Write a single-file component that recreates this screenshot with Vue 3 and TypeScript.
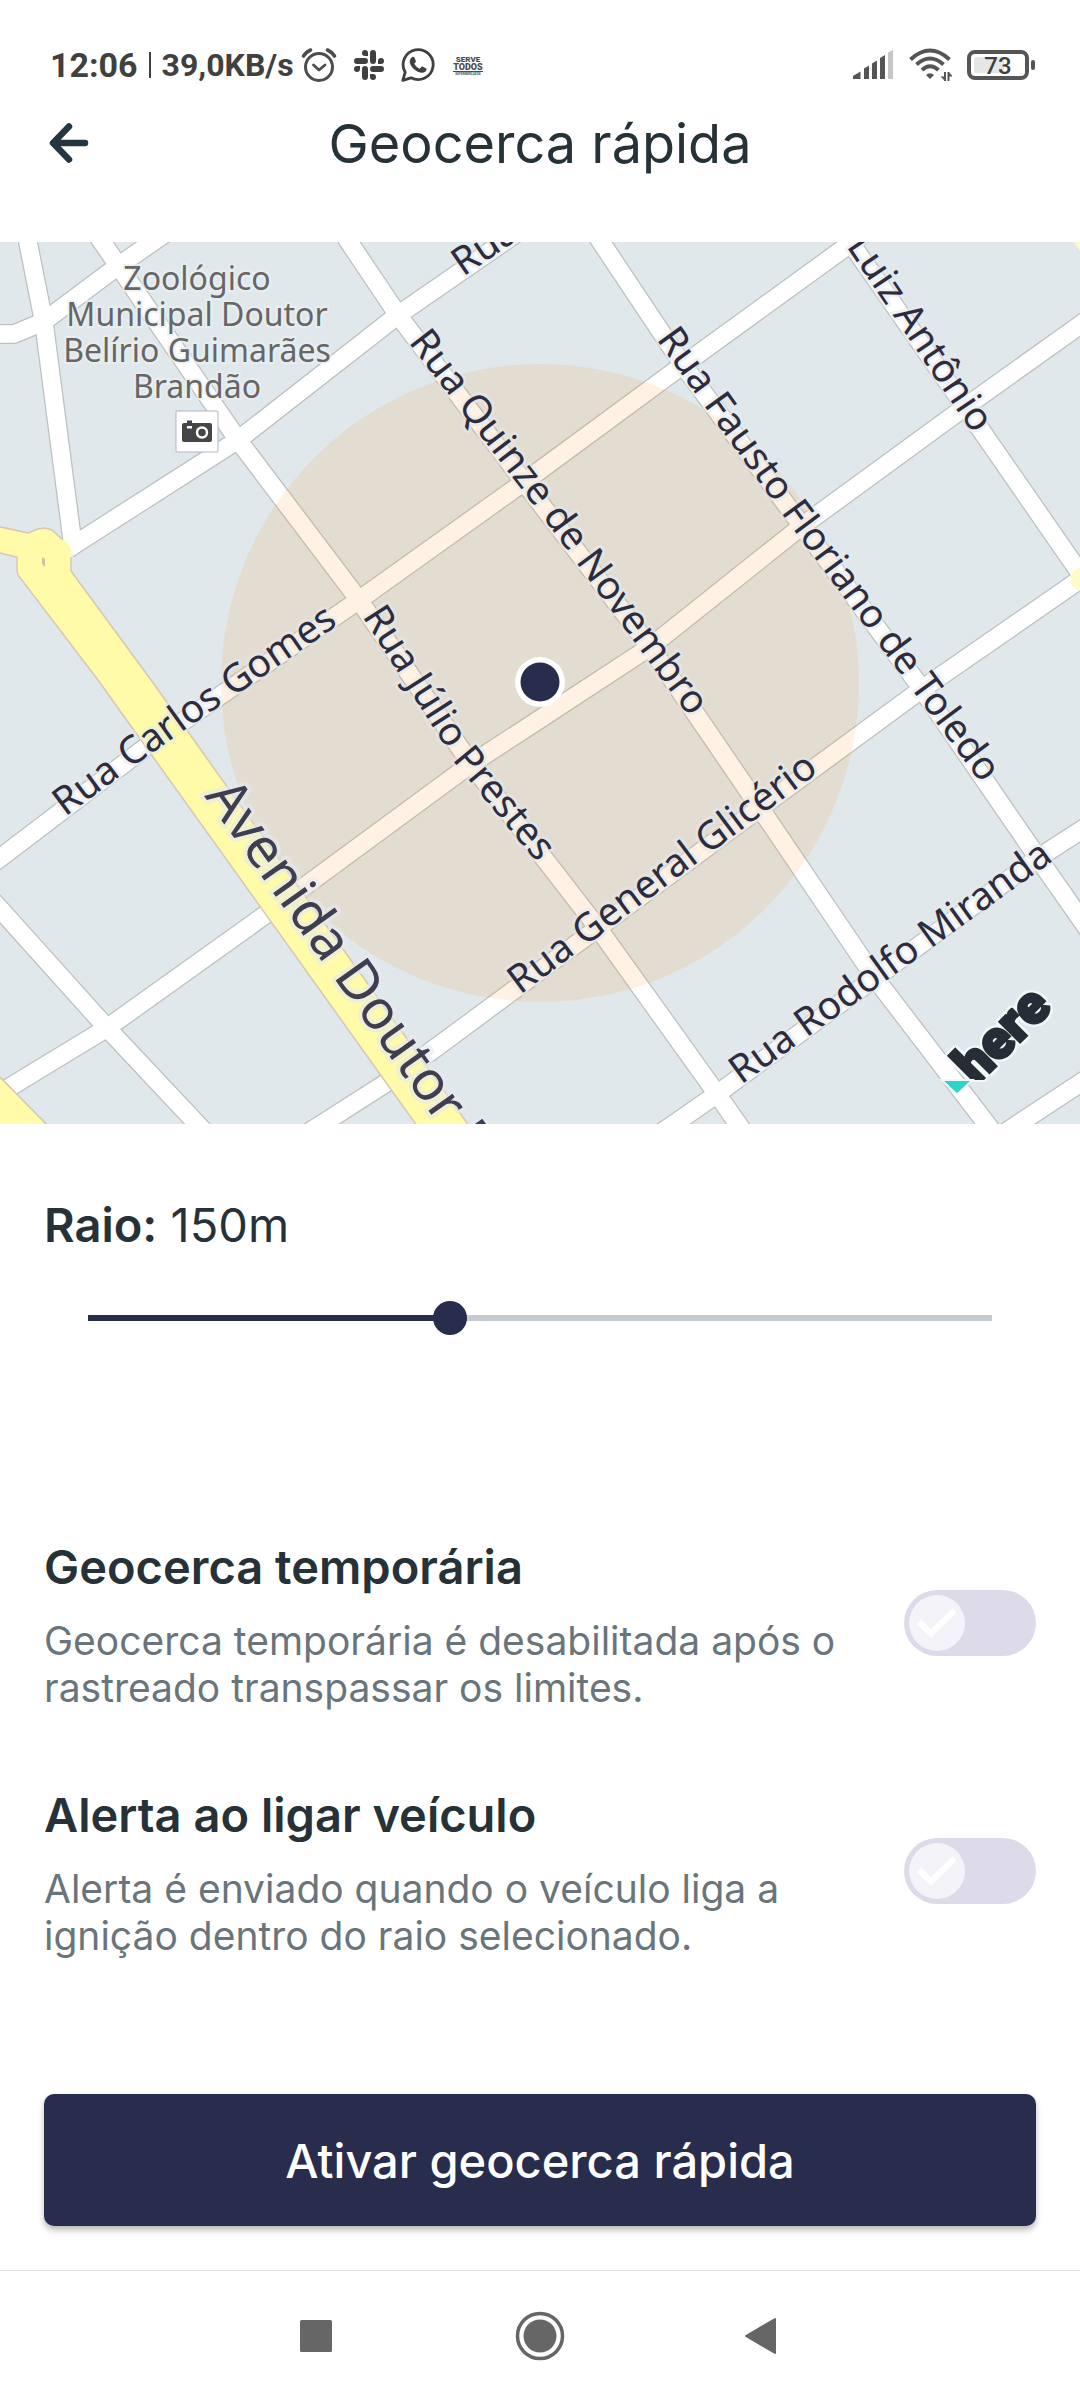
<script setup lang="ts">
import { computed, ref } from 'vue'

interface StreetLabel {
  id: string
  path: string
  text: string
  major?: boolean
}

interface Option {
  id: string
  title: string
  description: string
  enabled: boolean
}

const MIN_RADIUS = 50
const MAX_RADIUS = 300

const radius = ref(150)
const progress = computed(() => `${((radius.value - MIN_RADIUS) / (MAX_RADIUS - MIN_RADIUS)) * 100}%`)

const options = ref<Option[]>([
  {
    id: 'temporary',
    title: 'Geocerca temporária',
    description: 'Geocerca temporária é desabilitada após o rastreado transpassar os limites.',
    enabled: false,
  },
  {
    id: 'ignition',
    title: 'Alerta ao ligar veículo',
    description: 'Alerta é enviado quando o veículo liga a ignição dentro do raio selecionado.',
    enabled: false,
  },
])

const roads: string[] = [
  'M92 228 L102 242 L238 440 L359 600 L471 764 L598 928 L717 1094 L752 1144',
  'M340 228 L349 242 L398 315 L524 482 L650 647 L760 808 L875 978 L1002 1144',
  'M592 228 L601 242 L683 365 L802 526 L922 689 L1038 858 L1094 938',
  'M840 228 L859 255 L965 407 L1080 573 L1100 600',
  'M26 228 L28 242 L44 323 L73 546',
  'M-10 334 L14 334 L43 322 L118 266 L173 228',
  'M68 549 L77 543 L238 440 L398 315 L524 228',
  'M-12 867 L0 858 L146 747 L182 722 L359 600 L524 482 L683 365 L872 228',
  'M-10 1100 L10 1087 L107 1028 L265 915 L301 889 L471 764 L540 719 L650 647 L802 526 L965 407 L1094 315',
  'M290 1144 L322 1124 L386 1083 L430 1052 L598 928 L760 808 L922 689 L1075 583 L1100 566',
  'M644 1144 L674 1124 L717 1094 L875 978 L1038 858 L1100 818',
  'M988 1144 L1018 1124 L1100 1070',
  'M-12 896 L0 909 L107 1028 L216 1144',
]

const avenues: string[] = [
  'M-4 526 L28 533 L38 529 L45 528 L52 530 L64 541 L71 550 L71 571 L151 680 L482 1144 L430 1144 L98 680 L18 575 L17 571 L17 557 L-4 552 Z',
  'M-4 1073 L66 1144 L-4 1144 Z',
]

const labels: StreetLabel[] = [
  { id: 'gomes', path: 'M65 817 L134 766 L186 729 L360 610', text: 'Rua Carlos Gomes' },
  { id: 'quinze', path: 'M408 342 L545 520 L720 759', text: 'Rua Quinze de Novembro' },
  { id: 'julio', path: 'M362 616 L459 768 L590 927', text: 'Rua Júlio Prestes' },
  { id: 'fausto', path: 'M656 339 L785 518 L882 649 L1030 850', text: 'Rua Fausto Floriano de Toledo' },
  { id: 'luiz', path: 'M846 246 L1000 474', text: 'Luiz Antônio' },
  { id: 'top', path: 'M463 277 L580 197', text: 'Rua' },
  { id: 'glicerio', path: 'M520 995 L870 734', text: 'Rua General Glicério' },
  { id: 'miranda', path: 'M741 1085 L1110 820', text: 'Rua Rodolfo Miranda' },
  { id: 'avenida', path: 'M204 796 L539 1266', text: 'Avenida Doutor P', major: true },
]

const place = ['Zoológico', 'Municipal Doutor', 'Belírio Guimarães', 'Brandão']
</script>

<template>
  <div class="screen">
    <div class="status">
      <div class="status-left">
        <span class="time">12:06</span>
        <span class="bar"></span>
        <span class="speed">39,0KB/s</span>
        <svg class="alarm" width="36" height="36" viewBox="0 0 36 36" fill="none" stroke="#4d4d4d" stroke-width="3">
          <circle cx="18" cy="20" r="13.5" />
          <path d="M12.5 18 L18 23 L24 18" stroke-width="2.8" stroke-linecap="round" stroke-linejoin="round" />
          <path d="M2.5 9 Q5 5 9.500 3 M33.500 9 Q31 5 26.500 3" stroke-width="3.600" stroke-linecap="round" />
        </svg>
        <svg width="30" height="30" viewBox="0 0 30 30" fill="#404040">
          <path d="M11 0a3 3 0 1 0 0 6h3V3a3 3 0 0 0-3-3zM3 8a3 3 0 0 0 0 6h8a3 3 0 0 0 0-6z" />
          <path d="M30 11a3 3 0 1 0-6 0v3h3a3 3 0 0 0 3-3zM22 3a3 3 0 0 0-6 0v8a3 3 0 0 0 6 0z" />
          <path d="M19 30a3 3 0 1 0 0-6h-3v3a3 3 0 0 0 3 3zM27 22a3 3 0 0 0 0-6h-8a3 3 0 0 0 0 6z" />
          <path d="M0 19a3 3 0 1 0 6 0v-3H3a3 3 0 0 0-3 3zM8 27a3 3 0 0 0 6 0v-8a3 3 0 0 0-6 0z" />
        </svg>
        <svg class="whatsapp" width="34" height="34" viewBox="0 0 34 34">
          <path d="M1.800 32.400 L4.200 24.200 A15 15 0 1 1 10 29.800 Z" fill="none" stroke="#404040" stroke-width="2.800" stroke-linejoin="round" />
          <path d="M11 9.200c.8-.8 2-.6 2.400.3l1.400 3.200c.2.600.1 1.100-.3 1.600l-1.200 1.500c1.200 2.300 3 3.900 5.400 5l1.700-1.800c.4-.5.900-.6 1.500-.3l3 1.500c.7.400.8 1 .5 1.900-.7 2-2.900 3-5 2.600-5.800-1-10.500-5.600-11.600-10.300-.4-2 .7-4 2.200-5.200z" fill="#404040" />
        </svg>
        <svg width="32" height="22" viewBox="0 0 32 22" fill="#4a4a4a" text-anchor="middle">
          <text x="16" y="8" font-size="8" font-weight="900">SERVE</text>
          <text x="16" y="16" font-size="9" font-weight="900">TODOS</text>
          <rect x="1" y="17" width="30" height="1" />
          <text x="16" y="21" font-size="3" font-weight="700">SUPERMERCADOS</text>
        </svg>
      </div>
      <div class="status-right">
        <svg width="41" height="30" viewBox="0 0 41 30" fill="#555">
          <path d="M0 26 L7.500 21.500 V29 H0 Z" />
          <path d="M11 18.500 L16 15.500 V29 H11 Z" />
          <path d="M19 13.500 L24 10.500 V29 H19 Z" />
          <path d="M27 8 L32 5 V29 H27 Z" />
          <path d="M35 2.500 L40 0 V29 H35 Z" fill="#c6c6c6" />
        </svg>
        <svg width="43" height="34" viewBox="0 0 43 34" fill="none" stroke="#555" stroke-width="4">
          <path d="M1.500 11.500 Q21 -6.500 40.500 11.500" />
          <path d="M7.500 16.500 Q21 4.500 34.500 16.500" />
          <path d="M13 22 Q21 14.500 29.500 22" />
          <path d="M17 27 Q21 23.500 25 27 L21 31 Z" fill="#555" stroke="none" />
          <path d="M36 24 V33 M39.500 33 V24" stroke-width="2" />
          <path d="M31.500 28.500 H36 V33 Z M44 28.500 H39.500 V24 Z" fill="#555" stroke="none" />
        </svg>
        <svg width="68" height="30" viewBox="0 0 68 30">
          <rect x="2" y="2" width="58" height="26" rx="6" fill="none" stroke="#555" stroke-width="4" />
          <rect x="7" y="7" width="30" height="16" rx="3" fill="#e6e6e6" />
          <rect x="64" y="10" width="4" height="10" rx="2" fill="#555" />
          <text x="31" y="24" font-size="24" font-weight="500" text-anchor="middle" fill="#404040">73</text>
        </svg>
      </div>
    </div>

    <header class="header">
      <button class="back" type="button" aria-label="Voltar">
        <svg width="40" height="40" viewBox="0 0 40 40" fill="none" stroke="#263640" stroke-width="6.500" stroke-linecap="round" stroke-linejoin="round">
          <path d="M20 3.500 L4 20 L20 36.500 M5 20 H36" />
        </svg>
      </button>
      <h1>Geocerca rápida</h1>
    </header>

    <svg class="map" viewBox="0 242 1080 882" role="img" aria-label="Mapa da geocerca">
      <rect x="0" y="242" width="1080" height="882" fill="#e0e8eb" />
      <g fill="none" stroke-linejoin="round">
        <path v-for="d in roads" :key="'c' + d" :d="d" stroke="#bcc0c0" stroke-width="20" />
        <path v-for="d in roads" :key="'f' + d" :d="d" stroke="#fff" stroke-width="17.500" />
      </g>
      <path d="M1074 242 H1080 V251 Z" fill="#fdfbc8" />
      <circle cx="1081" cy="579" r="11" fill="#fdfbc8" />
      <circle cx="540" cy="683" r="319" fill="#ff8a15" fill-opacity=".12" />
      <path v-for="d in avenues" :key="d" :d="d" fill="#fffba8" stroke="#d8c6b2" stroke-width="1.500" />
      <path d="M62 541 Q71 545 70 556 L78 551 L72 536 Z" fill="#fff" />
      <path d="M62 541 Q70 546 70 557" fill="none" stroke="#fffba8" stroke-width="4" />
      <path d="M42 557 L45 559 V567 L42 564 Z" fill="#d2c0a4" />

      <defs>
        <path v-for="l in labels" :id="'street-' + l.id" :key="l.id" :d="l.path" />
        <clipPath id="logo-clip"><rect x="900" y="960" width="180" height="120" /></clipPath>
      </defs>
      <text v-for="l in labels" :key="l.id" :class="['street', { major: l.major }]">
        <textPath :href="'#street-' + l.id">{{ l.text }}</textPath>
      </text>

      <text class="place" text-anchor="middle">
        <tspan v-for="(line, i) in place" :key="line" x="197" :y="290 + i * 36">{{ line }}</tspan>
      </text>
      <rect x="176" y="411" width="42" height="41" rx="1" fill="#fff" stroke="#b3b1cb" />
      <path d="M184 423 h3 v-2.500 h5 v2.500 h18 q2 0 2 2 v15 q0 2 -2 2 h-26 q-2 0 -2 -2 v-15 q0 -2 2 -2 z" fill="#454545" />
      <rect x="187" y="426" width="5" height="2.500" fill="#fff" />
      <circle cx="202" cy="432.500" r="5" fill="#454545" stroke="#fff" stroke-width="2.500" />

      <circle cx="540" cy="682" r="25" fill="#fff" />
      <circle cx="540" cy="682" r="19.500" fill="#282c4d" />

      <g class="logo-halo">
        <g clip-path="url(#logo-clip)">
          <text class="logo" transform="translate(976 1086) rotate(-45)">here</text>
        </g>
      </g>
      <path d="M941.500 1080 H972.500 L957 1094.500 Z" fill="#2dd5c9" stroke="#f4f6f7" stroke-width="2" />
    </svg>

    <main class="content">
      <label class="radius" for="radius"><b>Raio:</b> {{ radius }}m</label>
      <input
        id="radius"
        v-model.number="radius"
        class="slider"
        type="range"
        :min="MIN_RADIUS"
        :max="MAX_RADIUS"
        :style="{ '--progress': progress }"
      />

      <div class="options">
        <section v-for="o in options" :key="o.id" class="option">
          <div>
            <h2><label :for="o.id">{{ o.title }}</label></h2>
            <p>{{ o.description }}</p>
          </div>
          <span class="toggle">
            <input :id="o.id" v-model="o.enabled" type="checkbox" />
            <svg width="56" height="56" viewBox="0 0 56 56" aria-hidden="true">
              <circle cx="28" cy="28" r="28" fill="#f4f3f9" />
              <path d="M10 27 L22 38.500 L45.500 15.500" fill="none" stroke="#fff" stroke-width="6" />
            </svg>
          </span>
        </section>
      </div>

      <button class="primary" type="button">Ativar geocerca rápida</button>
    </main>

    <nav class="system-nav">
      <button type="button" aria-label="Recentes">
        <svg width="50" height="50" viewBox="0 0 50 50" fill="#666"><rect x="7" y="9" width="32" height="32" rx="1.500" /></svg>
      </button>
      <button type="button" aria-label="Início">
        <svg width="50" height="50" viewBox="0 0 50 50" fill="#666">
          <circle cx="25" cy="25" r="22.500" fill="none" stroke="#666" stroke-width="3.500" />
          <circle cx="25" cy="25" r="16.500" />
        </svg>
      </button>
      <button type="button" aria-label="Voltar ao anterior">
        <svg width="50" height="50" viewBox="0 0 50 50" fill="#666" stroke="#666" stroke-width="2" stroke-linejoin="round"><path d="M9 25 L38 8 V42 Z" /></svg>
      </button>
    </nav>
  </div>
</template>

<style scoped>
.screen {
  background: #fff;
  color: #263238;
  font-family: Inter, "Liberation Sans", sans-serif;
}

button {
  border: 0;
  padding: 0;
  background: none;
  font: inherit;
  color: inherit;
}

svg {
  display: block;
  flex: none;
}

.status {
  box-sizing: border-box;
  height: 100px;
  padding: 30px 45px 0 50px;
  display: flex;
  align-items: center;
  justify-content: space-between;
  font-family: Roboto, sans-serif;
  color: #404040;
}

.status-left,
.status-right {
  display: flex;
  align-items: center;
}

.status-right {
  gap: 15px;
}

.time {
  font-size: 34px;
  font-weight: 700;
  line-height: 40px;
}

.bar {
  width: 2px;
  height: 26px;
  margin: 0 11px;
  background: #404040;
}

.speed {
  font-size: 32px;
  font-weight: 700;
  line-height: 40px;
}

.alarm {
  margin: 0 17px 0 7px;
}

.whatsapp {
  margin: 0 17px;
}

.header {
  position: relative;
  box-sizing: border-box;
  height: 142px;
  padding: 10px 44px 0;
}

.header h1 {
  margin: 0;
  font-size: 54px;
  font-weight: 400;
  line-height: 68px;
  text-align: center;
}

.back {
  position: absolute;
  left: 49px;
  top: 23px;
}

.map {
  width: 100%;
  height: auto;
  overflow: hidden;
}

.street {
  font-family: "Noto Sans", sans-serif;
  font-size: 39px;
  fill: #2c2c3e;
  stroke: rgba(229, 233, 236, 0.6);
  stroke-width: 6px;
  stroke-linejoin: round;
  paint-order: stroke;
}

.street.major {
  font-size: 55px;
  fill: #3f3d52;
  stroke-width: 8px;
}

.place {
  font-family: "Noto Sans", sans-serif;
  font-size: 32px;
  fill: #666;
  stroke: rgba(235, 240, 242, 0.8);
  stroke-width: 4px;
  paint-order: stroke;
}

.logo {
  font-family: Roboto, sans-serif;
  font-size: 54px;
  font-weight: 900;
  fill: #272d37;
  stroke: #272d37;
  stroke-width: 3px;
}

.logo-halo {
  filter: drop-shadow(2px 0 0 #f4f6f7) drop-shadow(-2px 0 0 #f4f6f7) drop-shadow(0 2px 0 #f4f6f7) drop-shadow(0 -2px 0 #f4f6f7);
}

.content {
  display: flex;
  flex-direction: column;
  padding: 73px 44px 44px;
}

.radius {
  font-size: 47px;
  line-height: 56px;
}

.radius b {
  font-weight: 600;
}

.slider {
  appearance: none;
  height: 40px;
  margin: 45px 27px 0;
  background: linear-gradient(to right, #282c4d var(--progress), #c5cbce var(--progress)) center / calc(100% - 34px) 6px no-repeat;
}

.slider::-webkit-slider-thumb {
  appearance: none;
  width: 34px;
  height: 34px;
  border-radius: 50%;
  background: #282c4d;
}

.options {
  display: flex;
  flex-direction: column;
  gap: 76px;
  margin: 201px 0 135px;
}

.option {
  display: flex;
  align-items: center;
  justify-content: space-between;
  gap: 60px;
}

.option h2 {
  margin: 0 0 22px;
  font-size: 47px;
  font-weight: 600;
  line-height: 56px;
}

.option p {
  margin: 0;
  font-size: 39px;
  line-height: 47px;
  color: #69757b;
}

.toggle {
  position: relative;
  flex: none;
  margin-bottom: 4px;
}

.toggle input {
  appearance: none;
  display: block;
  width: 132px;
  height: 66px;
  margin: 0;
  border-radius: 33px;
  background: #dddaea;
}

.toggle svg {
  position: absolute;
  left: 5px;
  top: 5px;
  pointer-events: none;
}

.toggle input:checked {
  background: #282c4d;
}

.toggle input:checked + svg {
  left: 71px;
}

.primary {
  height: 132px;
  border-radius: 10px;
  background: #282c4d;
  color: #fff;
  font-size: 47px;
  font-weight: 500;
  box-shadow: 0 4px 6px rgba(0, 0, 0, 0.28);
}

.system-nav {
  display: flex;
  justify-content: center;
  gap: 172px;
  padding: 40px 0;
  border-top: 1px solid #e0e0e0;
}
</style>

<style>
body {
  background: #fff;
}
</style>
